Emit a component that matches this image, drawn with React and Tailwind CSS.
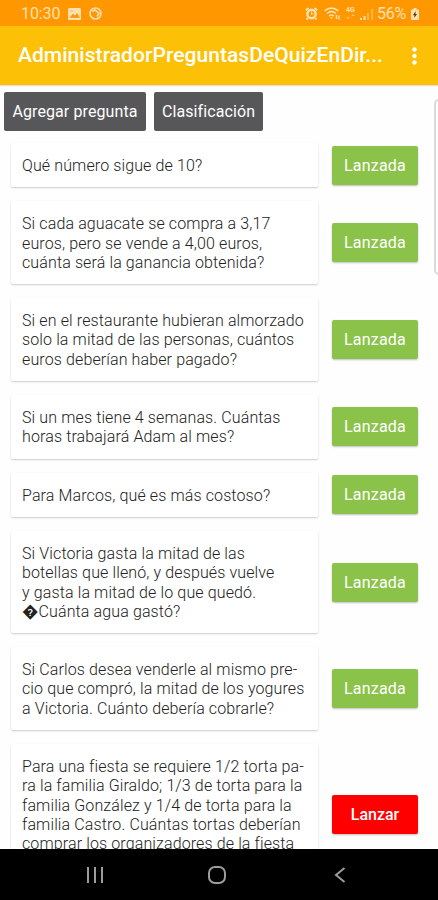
import { clsx } from "clsx";

const questions = [
  { lines: ["Qué número sigue de 10?"], launched: true },
  {
    lines: ["Si cada aguacate se compra a 3,17", "euros, pero se vende a 4,00 euros,", "cuánta será la ganancia obtenida?"],
    launched: true,
  },
  {
    lines: ["Si en el restaurante hubieran almorzado", "solo la mitad de las personas, cuántos", "euros deberían haber pagado?"],
    launched: true,
  },
  { lines: ["Si un mes tiene 4 semanas. Cuántas", "horas trabajará Adam al mes?"], launched: true },
  { lines: ["Para Marcos, qué es más costoso?"], launched: true },
  {
    lines: ["Si Victoria gasta la mitad de las", "botellas que llenó, y después vuelve", "y gasta la mitad de lo que quedó.", "\uFFFDCuánta agua gastó?"],
    launched: true,
  },
  {
    lines: ["Si Carlos desea venderle al mismo pre-", "cio que compró, la mitad de los yogures", "a Victoria. Cuánto debería cobrarle?"],
    launched: true,
  },
  {
    lines: [
      "Para una fiesta se requiere 1/2 torta pa-",
      "ra la familia Giraldo; 1/3 de torta para la",
      "familia González y 1/4 de torta para la",
      "familia Castro. Cuántas tortas deberían",
      "comprar los organizadores de la fiesta",
    ],
    launched: false,
  },
];

const StatusBar = () => {
  return (
    <div className="flex h-[26px] shrink-0 items-center bg-[#ff9800] pl-[21px] pr-[19px] pt-px text-[16px] text-[#ffe0b0]">
      <span className="w-[41px] tracking-[-0.1px]">10:30</span>
      <svg className="ml-[6px] h-3 w-[13px]" viewBox="0 0 13 12">
        <rect width="13" height="12" rx="1.5" fill="currentColor" />
        <path d="M2 9.5 5 6l2 2 2-2.5 2.5 4zM2 3h3" fill="#ff9800" stroke="#ff9800" strokeWidth=".6" />
      </svg>
      <svg className="ml-2 h-[13px] w-[13px]" viewBox="0 0 13 13" fill="none" stroke="currentColor">
        <circle cx="6.5" cy="6.5" r="5.5" strokeWidth="1.6" />
        <path d="M3.500 4.500 6 3l4 3.500-2 3" strokeWidth="1.5" />
      </svg>

      <div className="ml-auto flex items-center">
        {/* alarm */}
        <svg className="h-[13px] w-[13px]" viewBox="0 0 13 13" fill="none" stroke="currentColor">
          <circle cx="6.5" cy="7" r="4.2" strokeWidth="2.4" />
          <path d="M.8 3.2 3.5 1M12.2 3.2 9.5 1M2.8 11.2 1.5 12.5M10.2 11.2l1.3 1.3" strokeWidth="2" />
          <path d="M6.5 4.5v3l2-1" strokeWidth="1" />
        </svg>
        {/* wifi */}
        <svg className="ml-[6px] h-[13px] w-[17px]" viewBox="0 0 17 13" fill="none" stroke="currentColor">
          <path d="M.8 3.8c4-3.6 9.4-3.6 13.4 0M3 6.5c2.8-2.5 6.2-2.5 9 0M5.2 9c1.5-1.3 3.1-1.3 4.6 0" strokeWidth="1.6" />
          <path d="M6 10h3l-1.5 2z" fill="currentColor" stroke="none" />
          <path d="M12.5 8v4M15 8.5v4" strokeWidth="1.4" />
        </svg>
        <div className="ml-[4px] flex h-[13px] w-[11px] flex-col items-center">
          <span className="text-[7px] font-bold leading-[7px]">4G</span>
          <svg className="h-[5px] w-[9px]" viewBox="0 0 9 5">
            <path d="M0 3h4L2 5zM5 2h4L7 0z" fill="currentColor" opacity=".6" />
          </svg>
        </div>
        <svg className="ml-[4px] h-[12px] w-[13px]" viewBox="0 0 13 12" fill="currentColor">
          <path d="M0 10h2v2H0zM3.5 8h2v4h-2z" />
          <path d="M7 5h2v7H7zM11 1h2v11h-2z" opacity=".4" />
        </svg>
        <span className="ml-[4px] w-[31px] whitespace-nowrap text-[16px] tracking-[-0.3px]">56%</span>
        <svg className="ml-[3px] h-[12px] w-[8px]" viewBox="0 0 8 12">
          <path d="M2.5 0h3v1.5H7q1 0 1 1V11q0 1-1 1H1q-1 0-1-1V2.5q0-1 1-1h1.500z" fill="currentColor" />
          <path d="M4.7 3 2 7.3h1.6L3.2 10 6 6H4.4z" fill="#5b3200" />
        </svg>
      </div>
    </div>
  );
};

const AppBar = () => {
  return (
    <header className="flex h-[59px] shrink-0 items-center justify-between bg-[#fcc107] pl-[18px] pr-[21px] pt-px text-white shadow-[0_1px_1px_rgba(0,0,0,0.12)]">
      <h1 className="whitespace-nowrap text-[21px] font-medium tracking-[0.05px]">AdministradorPreguntasDeQuizEnDir...</h1>
      <svg className="h-[18px] w-[5px]" viewBox="0 0 5 18" fill="currentColor">
        <circle cx="2.5" cy="2.5" r="2.2" />
        <circle cx="2.5" cy="9" r="2.2" />
        <circle cx="2.5" cy="15.5" r="2.2" />
      </svg>
    </header>
  );
};

const QuestionRow = ({ question }) => {
  const { lines, launched } = question;
  return (
    <li className="flex items-center justify-between">
      <div
        className={clsx(
          "w-[307px] rounded-[2px] bg-white pb-[12px] pl-[11px] pt-[13px] text-[16px] leading-[19.3px] font-light text-[#222222] shadow-[0_1px_2px_rgba(0,0,0,0.2)]",
          !launched && "min-h-[140px]"
        )}
      >
        {lines.map((line) => (
          <p key={line} className="whitespace-nowrap tracking-[0.12px]">
            {line}
          </p>
        ))}
      </div>
      <button
        className={clsx(
          "h-[39px] w-[86px] rounded-[2px] pt-px text-[16px] text-white shadow-[0_1px_2px_rgba(0,0,0,0.25)]",
          launched ? "bg-[#8bc34a] tracking-[0.2px]" : "bg-[#ff0000] font-medium"
        )}
      >
        {launched ? "Lanzada" : "Lanzar"}
      </button>
    </li>
  );
};

const NavigationBar = () => {
  return (
    <nav className="flex h-[51px] shrink-0 items-center bg-black pl-[86px] text-[#9c9c9c]">
      <svg className="h-[18px] w-[18px]" viewBox="0 0 18 18" stroke="currentColor" strokeWidth="2">
        <path d="M2 1v16M9 1v16M16 1v16" />
      </svg>
      <svg className="ml-[103px] h-[20px] w-[20px]" viewBox="0 0 20 20" fill="none" stroke="currentColor" strokeWidth="2">
        <rect x="2" y="2" width="16" height="16" rx="6" />
      </svg>
      <svg className="ml-[107px] h-[18px] w-[12px]" viewBox="0 0 12 18" fill="none" stroke="currentColor" strokeWidth="2">
        <path d="M10.5 2 2 9l8.5 7" />
      </svg>
    </nav>
  );
};

const App = () => {
  return (
    <div className="relative flex h-[900px] w-[438px] flex-col overflow-hidden bg-[#fefefe] font-[Roboto,sans-serif]">
      <StatusBar />
      <AppBar />

      <main className="min-h-0 flex-1 overflow-hidden">
        <div className="flex gap-2 pl-[4px] pt-[7px] text-[16px] text-white">
          <button className="h-[39px] w-[142px] rounded-[2px] bg-[#575759] pt-px tracking-[0.1px]">Agregar pregunta</button>
          <button className="h-[39px] w-[109px] rounded-[2px] bg-[#575759] pt-px tracking-[0.1px]">Clasificación</button>
        </div>
        <ul className="mt-[12px] flex flex-col gap-[14px] pl-[11px] pr-[20px]">
          {questions.map((question) => (
            <QuestionRow key={question.lines[0]} question={question} />
          ))}
        </ul>
      </main>

      <NavigationBar />

      {/* edge panel handle */}
      <div className="absolute right-[-6px] top-[99px] h-[176px] w-[10px] rounded-[5px] border-2 border-[#dadada] bg-white" />
    </div>
  );
};

export default App;
